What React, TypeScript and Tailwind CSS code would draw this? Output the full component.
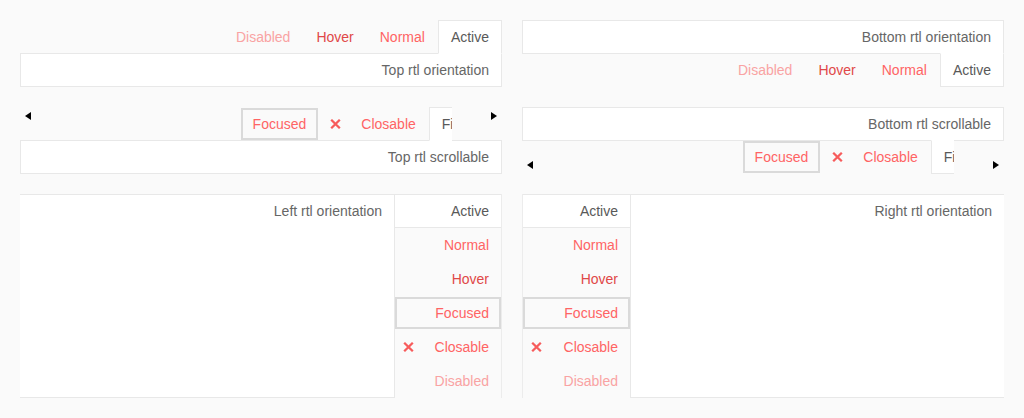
import React from 'react';

type Kind = 'active' | 'normal' | 'hover' | 'disabled' | 'focused' | 'closable';

const textColor: Record<Kind, string> = {
  active: 'text-[#595959]',
  normal: 'text-[#ff6464]',
  hover: 'text-[#e04848]',
  disabled: 'text-[#f9a3a3]',
  focused: 'text-[#ff6464]',
  closable: 'text-[#ff6464]',
};

function CloseX() {
  return (
    <svg width="11" height="10" viewBox="0 0 11 10" className="shrink-0">
      <path d="M1.2 0.8 L9.8 9.2 M9.8 0.8 L1.2 9.2" stroke="#f75c5c" strokeWidth="2.3" fill="none" />
    </svg>
  );
}

function ArrowLeft() {
  return (
    <svg width="6" height="8" viewBox="0 0 6 8">
      <polygon points="6,0 6,8 0,4" fill="#000" />
    </svg>
  );
}

function ArrowRight() {
  return (
    <svg width="6" height="8" viewBox="0 0 6 8">
      <polygon points="0,0 0,8 6,4" fill="#000" />
    </svg>
  );
}

function HTab({ label, kind, pos }: { label: string; kind: Kind; pos: 'top' | 'bottom' }) {
  let cls = 'relative z-10 h-[34px] border flex items-center shrink-0 leading-4 whitespace-nowrap ' + textColor[kind];
  cls += pos === 'top' ? ' -mb-px' : ' -mt-px';
  if (kind === 'active') {
    cls += pos === 'top' ? ' bg-white border-[#e8e8e8] border-b-white' : ' bg-white border-[#e8e8e8] border-t-white';
  } else {
    cls += ' border-transparent';
  }
  if (kind === 'focused') cls += ' shadow-[inset_0_0_0_2px_#dadada]';
  if (kind === 'closable') {
    return (
      <div className={cls + ' pl-[10px] pr-3'}>
        <CloseX />
        <span className="ml-[20px]">{label}</span>
      </div>
    );
  }
  return <div className={cls + ' px-3'}>{label}</div>;
}

function VTab({ label, kind }: { label: string; kind: Kind }) {
  let cls = 'h-[34px] flex items-center leading-4 whitespace-nowrap ' + textColor[kind];
  if (kind === 'active') cls += ' bg-white border-y border-[#e8e8e8]';
  if (kind === 'focused') cls += ' border-y border-transparent shadow-[inset_0_0_0_2px_#dadada]';
  if (kind === 'closable') {
    return (
      <div className={cls + ' justify-between pl-2 pr-3'}>
        <CloseX />
        <span>{label}</span>
      </div>
    );
  }
  return <div className={cls + ' justify-end pr-3'}>{label}</div>;
}

function Panel({ children, extra = 'border' }: { children: React.ReactNode; extra?: string }) {
  return (
    <div className={'bg-white border-[#e8e8e8] px-3 py-2 leading-4 text-right text-[#666] ' + extra}>
      {children}
    </div>
  );
}

const basicTabs: { label: string; kind: Kind }[] = [
  { label: 'Disabled', kind: 'disabled' },
  { label: 'Hover', kind: 'hover' },
  { label: 'Normal', kind: 'normal' },
  { label: 'Active', kind: 'active' },
];

function ScrollBar({ pos }: { pos: 'top' | 'bottom' }) {
  const align = pos === 'top' ? 'items-start' : 'items-end';
  const pad = pos === 'top' ? 'pt-[5px]' : 'pb-[5px]';
  return (
    <div className={'flex h-[34px] relative z-10 ' + align + (pos === 'top' ? ' -mb-px' : ' -mt-px')}>
      <div className={'w-[32px] pl-[5px] shrink-0 flex ' + pad}>
        <ArrowLeft />
      </div>
      <div className="flex-1 overflow-hidden flex justify-end h-[34px]">
        <div className={'flex shrink-0 mr-[-30px] ' + (pos === 'top' ? 'mb-px' : 'mt-px')}>
          <HTab label="Focused" kind="focused" pos={pos} />
          <HTab label="Closable" kind="closable" pos={pos} />
          <HTab label="First" kind="active" pos={pos} />
        </div>
      </div>
      <div className={'w-[50px] pr-[5px] shrink-0 flex justify-end ' + pad}>
        <ArrowRight />
      </div>
    </div>
  );
}

const vTabs: { label: string; kind: Kind }[] = [
  { label: 'Active', kind: 'active' },
  { label: 'Normal', kind: 'normal' },
  { label: 'Hover', kind: 'hover' },
  { label: 'Focused', kind: 'focused' },
  { label: 'Closable', kind: 'closable' },
  { label: 'Disabled', kind: 'disabled' },
];

export default function App() {
  return (
    <div className="w-[1024px] h-[418px] bg-[#fafafa] p-5 font-['Liberation_Sans',Arial,sans-serif] text-[14px] overflow-hidden">
      <div className="grid grid-cols-[482px_482px] gap-5">
        {/* Top rtl orientation */}
        <div className="flex flex-col">
          <div className="flex justify-end">
            {basicTabs.map((t) => (
              <HTab key={t.label} label={t.label} kind={t.kind} pos="top" />
            ))}
          </div>
          <Panel>Top rtl orientation</Panel>
        </div>
        {/* Bottom rtl orientation */}
        <div className="flex flex-col">
          <Panel>Bottom rtl orientation</Panel>
          <div className="flex justify-end">
            {basicTabs.map((t) => (
              <HTab key={t.label} label={t.label} kind={t.kind} pos="bottom" />
            ))}
          </div>
        </div>
        {/* Top rtl scrollable */}
        <div className="flex flex-col">
          <ScrollBar pos="top" />
          <Panel>Top rtl scrollable</Panel>
        </div>
        {/* Bottom rtl scrollable */}
        <div className="flex flex-col">
          <Panel>Bottom rtl scrollable</Panel>
          <ScrollBar pos="bottom" />
        </div>
        {/* Left rtl orientation */}
        <div className="flex h-[204px]">
          <Panel extra="flex-1 border-y border-r">Left rtl orientation</Panel>
          <div className="w-[107px] border-r border-[#ececec] flex flex-col">
            {vTabs.map((t) => (
              <VTab key={t.label} label={t.label} kind={t.kind} />
            ))}
          </div>
        </div>
        {/* Right rtl orientation */}
        <div className="flex h-[204px]">
          <div className="w-[108px] border-l border-[#ececec] flex flex-col">
            {vTabs.map((t) => (
              <VTab key={t.label} label={t.label} kind={t.kind} />
            ))}
          </div>
          <Panel extra="flex-1 border-y border-l">Right rtl orientation</Panel>
        </div>
      </div>
    </div>
  );
}
